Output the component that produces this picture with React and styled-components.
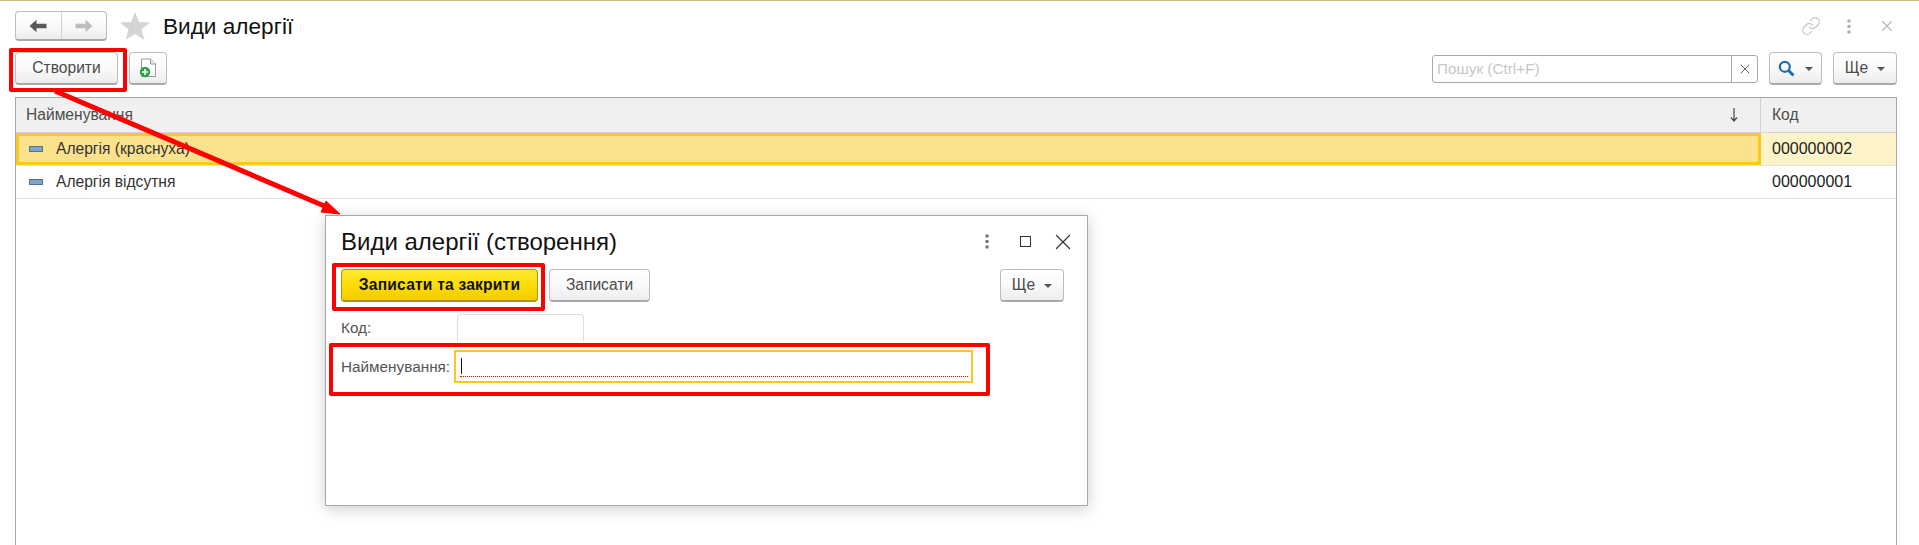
import React from 'react';
import styled, { createGlobalStyle, css } from 'styled-components';
import { X, Link as LinkIcon } from 'lucide-react';

const GlobalStyle = createGlobalStyle`
  html, body { margin: 0; padding: 0; background: #fff; }
  body { font-family: 'Liberation Sans', Arial, sans-serif; font-size: 15.6px; color: #333; overflow: hidden; }
`;

const buttonBase = css`
  box-sizing: border-box;
  height: 33px;
  display: flex;
  align-items: center;
  justify-content: center;
  border: 1px solid #bdbdbd;
  border-bottom: 2px solid #a9a9a9;
  border-radius: 4px;
  background: linear-gradient(#ffffff, #f9f9f9 55%, #ececec);
  color: #4b4b4b;
`;

const App = () => (
  <Page>
    <GlobalStyle />
    <TitleBar>
      <NavGroup>
        <NavButton><ArrowIcon color="#595959" /></NavButton>
        <NavButton $last><ArrowIcon color="#bdbdbd" flip /></NavButton>
      </NavGroup>
      <StarIcon />
      <Title>Види алергії</Title>
      <WindowIcons>
        <IconCell><LinkIcon size={20} color="#c8c8c8" strokeWidth={1.5} /></IconCell>
        <IconCell><DotsIcon /></IconCell>
        <IconCell><X size={18} color="#b5b5b5" strokeWidth={1.5} /></IconCell>
      </WindowIcons>
    </TitleBar>

    <Toolbar>
      <Button $w={103}>Створити</Button>
      <Button $w={38}><NewDocIcon /></Button>
      <SearchBox>
        <SearchText>Пошук (Ctrl+F)</SearchText>
        <ClearCell><X size={16} color="#555" strokeWidth={1.4} /></ClearCell>
      </SearchBox>
      <Button $w={53}>
        <SearchIcon />
        <Caret $left={10} />
      </Button>
      <Button $w={64}>
        Ще
        <Caret $left={9} />
      </Button>
    </Toolbar>

    <Table>
      <HeadRow>
        <HeadCell>
          Найменування
          <SortArrow />
        </HeadCell>
        <HeadCell $last>Код</HeadCell>
      </HeadRow>
      <Row>
        <NameCell $selected><RowIcon />Алергія (краснуха)</NameCell>
        <CodeCell $selected>000000002</CodeCell>
      </Row>
      <Row>
        <NameCell><RowIcon />Алергія відсутня</NameCell>
        <CodeCell>000000001</CodeCell>
      </Row>
    </Table>

    <Dialog>
      <DialogHead>
        <DialogTitle>Види алергії (створення)</DialogTitle>
        <DialogIcons>
          <IconCell><DotsIcon dark /></IconCell>
          <IconCell><MaxBox /></IconCell>
          <IconCell><X size={26} color="#333" strokeWidth={1.1} /></IconCell>
        </DialogIcons>
      </DialogHead>
      <DialogBar>
        <PrimaryButton>Записати та закрити</PrimaryButton>
        <Button $w={101}>Записати</Button>
        <Button $w={64} $push>
          Ще
          <Caret $left={9} />
        </Button>
      </DialogBar>
      <CodeRow>
        <FieldLabel>Код:</FieldLabel>
        <CodeInput />
      </CodeRow>
      <NameRow>
        <FieldLabel>Найменування:</FieldLabel>
        <NameInput>
          <TextCursor />
          <Dotted />
        </NameInput>
      </NameRow>
    </Dialog>

    <Arrow />
    <RedBox $x={9} $y={47} $w={118} $h={44} />
    <RedBox $x={332} $y={262} $w={213} $h={48} />
    <RedBox $x={329} $y={342} $w={661} $h={53} />
  </Page>
);

const ArrowIcon = ({ color, flip }) => (
  <svg width="18" height="14" viewBox="0 0 18 14" style={{ transform: flip ? 'scaleX(-1)' : 'none' }}>
    <path d="M0.5 7 L7.5 0.8 V4.8 H17.5 V9.2 H7.5 V13.2 Z" fill={color} />
  </svg>
);

const StarIcon = () => (
  <StarSvg width="30" height="28" viewBox="0 0 30 28">
    <path d="M15 0 L19 10 L30 10.6 L21.4 17.4 L24.4 28 L15 22 L5.6 28 L8.6 17.4 L0 10.6 L11 10 Z" fill="#d4d4d4" />
  </StarSvg>
);

const DotsIcon = ({ dark }) => (
  <svg width="4" height="15" viewBox="0 0 4 15">
    <circle cx="2" cy="2" r="1.8" fill={dark ? '#777' : '#b0b0b0'} />
    <circle cx="2" cy="7.5" r="1.8" fill={dark ? '#777' : '#b0b0b0'} />
    <circle cx="2" cy="13" r="1.8" fill={dark ? '#777' : '#b0b0b0'} />
  </svg>
);

const NewDocIcon = () => (
  <svg width="18" height="20" viewBox="0 0 18 20">
    <path d="M2.5 1 H11.5 L16.5 6 V18.5 H2.5 Z" fill="#fff" stroke="#9a9a9a" />
    <path d="M11.5 1 V6 H16.5" fill="#eee" stroke="#9a9a9a" />
    <circle cx="6" cy="14" r="5.2" fill="#2ea043" />
    <path d="M6 11 V17 M3 14 H9" stroke="#fff" strokeWidth="1.6" />
  </svg>
);

const SearchIcon = () => (
  <svg width="17" height="17" viewBox="0 0 17 17">
    <circle cx="6.8" cy="6.8" r="5" fill="none" stroke="#1f6ea8" strokeWidth="2.2" />
    <path d="M10.5 10.5 L15.5 15.5" stroke="#1f6ea8" strokeWidth="3" />
  </svg>
);

const SortArrow = () => (
  <SortSvg width="8" height="14" viewBox="0 0 8 14">
    <path d="M4 0 V12.5 M1 9.5 L4 13 L7 9.5" fill="none" stroke="#444" strokeWidth="1.2" />
  </SortSvg>
);

const Arrow = () => (
  <ArrowSvg width="345" height="135" viewBox="0 0 345 135">
    <path d="M55 0 L329 117" stroke="#ff0000" strokeWidth="5" fill="none" />
    <path d="M340 123 L321 121 L326 110 Z" fill="#ff0000" stroke="#ff0000" strokeWidth="1" />
  </ArrowSvg>
);

const Page = styled.div`
  position: relative;
  box-sizing: border-box;
  width: 1919px;
  height: 545px;
  display: flex;
  flex-direction: column;
  border-top: 1px solid #d3bf72;
  overflow: hidden;
`;

const TitleBar = styled.div`
  height: 30px;
  margin-top: 10px;
  padding: 0 27px 0 15px;
  display: flex;
  align-items: center;
`;

const NavGroup = styled.div`
  box-sizing: border-box;
  width: 92px;
  height: 30px;
  display: flex;
  border: 1px solid #bdbdbd;
  border-bottom: 2px solid #a9a9a9;
  border-radius: 4px;
  background: linear-gradient(#ffffff, #f9f9f9 55%, #ececec);
`;

const NavButton = styled.div`
  flex: 1;
  display: flex;
  align-items: center;
  justify-content: center;
  border-right: ${p => (p.$last ? 'none' : '1px solid #d2d2d2')};
`;

const StarSvg = styled.svg`
  margin-left: 13px;
`;

const Title = styled.h1`
  margin: 1px 0 0 13px;
  font-size: 22.6px;
  font-weight: normal;
  color: #111;
`;

const IconCell = styled.span`
  width: 38px;
  display: flex;
  align-items: center;
  justify-content: center;
`;

const WindowIcons = styled.div`
  margin-left: auto;
  margin-right: -14px;
  display: flex;
  align-items: center;
`;

const Toolbar = styled.div`
  height: 33px;
  margin-top: 11px;
  padding: 0 22px 0 15px;
  display: flex;
  align-items: center;
  gap: 11px;
`;

const Button = styled.div`
  ${buttonBase}
  width: ${p => p.$w}px;
  ${p => p.$push && 'margin-left: auto;'}
`;

const PrimaryButton = styled.div`
  ${buttonBase}
  width: 197px;
  border-color: #b0960a;
  background: linear-gradient(#ffe933, #fbd900 60%, #f2cd00);
  color: #111;
  font-weight: bold;
  letter-spacing: 0.2px;
`;

const Caret = styled.span`
  width: 0;
  height: 0;
  margin-left: ${p => p.$left}px;
  margin-top: 2px;
  border-left: 4px solid transparent;
  border-right: 4px solid transparent;
  border-top: 4px solid #555;
`;

const SearchBox = styled.div`
  box-sizing: border-box;
  width: 326px;
  height: 28px;
  margin-left: auto;
  display: flex;
  border: 1px solid #a9a9a9;
  border-radius: 3px;
  background: #fff;
`;

const SearchText = styled.div`
  flex: 1;
  padding-left: 4px;
  line-height: 26px;
  font-size: 15.3px;
  color: #c8c8c8;
`;

const ClearCell = styled.div`
  width: 25px;
  display: flex;
  align-items: center;
  justify-content: center;
  border-left: 1px solid #a9a9a9;
`;

const Table = styled.div`
  flex: 1;
  margin: 12px 22px 0 15px;
  border: 1px solid #a8a8a8;
  border-bottom: none;
`;

const gridRow = css`
  display: grid;
  grid-template-columns: 1fr 135px;
`;

const HeadRow = styled.div`
  ${gridRow}
  height: 34px;
  background: #f0f0f0;
  border-bottom: 1px solid #d4d4d4;
`;

const HeadCell = styled.div`
  display: flex;
  align-items: center;
  padding-left: ${p => (p.$last ? '11px' : '10px')};
  color: #4d4d4d;
  ${p => !p.$last && 'border-right: 1px solid #d4d4d4;'}
`;

const SortSvg = styled.svg`
  margin-left: auto;
  margin-right: 22px;
`;

const Row = styled.div`
  ${gridRow}
  height: 32px;
  border-bottom: 1px solid #e4e4e4;
`;

const NameCell = styled.div`
  box-sizing: border-box;
  display: flex;
  align-items: center;
  padding-left: ${p => (p.$selected ? '10px' : '13px')};
  color: #333;
  ${p => p.$selected && 'background: #fde28d; border: 3px solid #fcc81f;'}
`;

const CodeCell = styled.div`
  display: flex;
  align-items: center;
  padding-left: 11px;
  font-size: 16px;
  color: #222;
  ${p => p.$selected && 'background: #fdf3c8;'}
`;

const RowIcon = styled.span`
  box-sizing: border-box;
  width: 14px;
  height: 6px;
  margin-right: 13px;
  background: #7fa6c9;
  border: 1px solid #4d7396;
`;

const Dialog = styled.div`
  position: absolute;
  left: 325px;
  top: 214px;
  box-sizing: border-box;
  width: 763px;
  height: 291px;
  padding: 0 23px 0 15px;
  background: #fff;
  border: 1px solid #a8a8a8;
  box-shadow: 0 3px 14px rgba(0, 0, 0, 0.2);
`;

const DialogHead = styled.div`
  height: 51px;
  margin-bottom: 2px;
  display: flex;
  align-items: center;
`;

const DialogTitle = styled.div`
  font-size: 24px;
  color: #111;
`;

const DialogIcons = styled.div`
  margin-left: auto;
  margin-right: -18px;
  display: flex;
  align-items: center;
`;

const MaxBox = styled.span`
  box-sizing: border-box;
  width: 11px;
  height: 11px;
  border: 1px solid #333;
`;

const DialogBar = styled.div`
  display: flex;
  align-items: center;
  gap: 11px;
`;

const CodeRow = styled.div`
  height: 27px;
  margin-top: 12px;
  display: flex;
  align-items: center;
`;

const NameRow = styled.div`
  height: 33px;
  margin-top: 9px;
  display: flex;
  align-items: center;
`;

const FieldLabel = styled.div`
  width: 113px;
  flex: none;
  font-size: 15.3px;
  color: #555;
`;

const CodeInput = styled.div`
  box-sizing: border-box;
  width: 127px;
  height: 27px;
  margin-left: 3px;
  border: 1px solid #dedede;
  border-bottom: none;
  border-radius: 4px 4px 0 0;
`;

const NameInput = styled.div`
  position: relative;
  box-sizing: border-box;
  width: 519px;
  height: 33px;
  border: 2px solid #fcc81f;
`;

const TextCursor = styled.span`
  position: absolute;
  left: 5px;
  top: 6px;
  width: 1px;
  height: 16px;
  background: #111;
`;

const Dotted = styled.span`
  position: absolute;
  left: 4px;
  right: 3px;
  top: 24px;
  border-top: 1px dotted #f00;
`;

const ArrowSvg = styled.svg`
  position: absolute;
  left: 0;
  top: 90px;
`;

const RedBox = styled.div`
  position: absolute;
  left: ${p => p.$x}px;
  top: ${p => p.$y}px;
  width: ${p => p.$w}px;
  height: ${p => p.$h}px;
  box-sizing: border-box;
  border: 4px solid #ff0000;
  border-radius: 2px;
`;

export default App;
